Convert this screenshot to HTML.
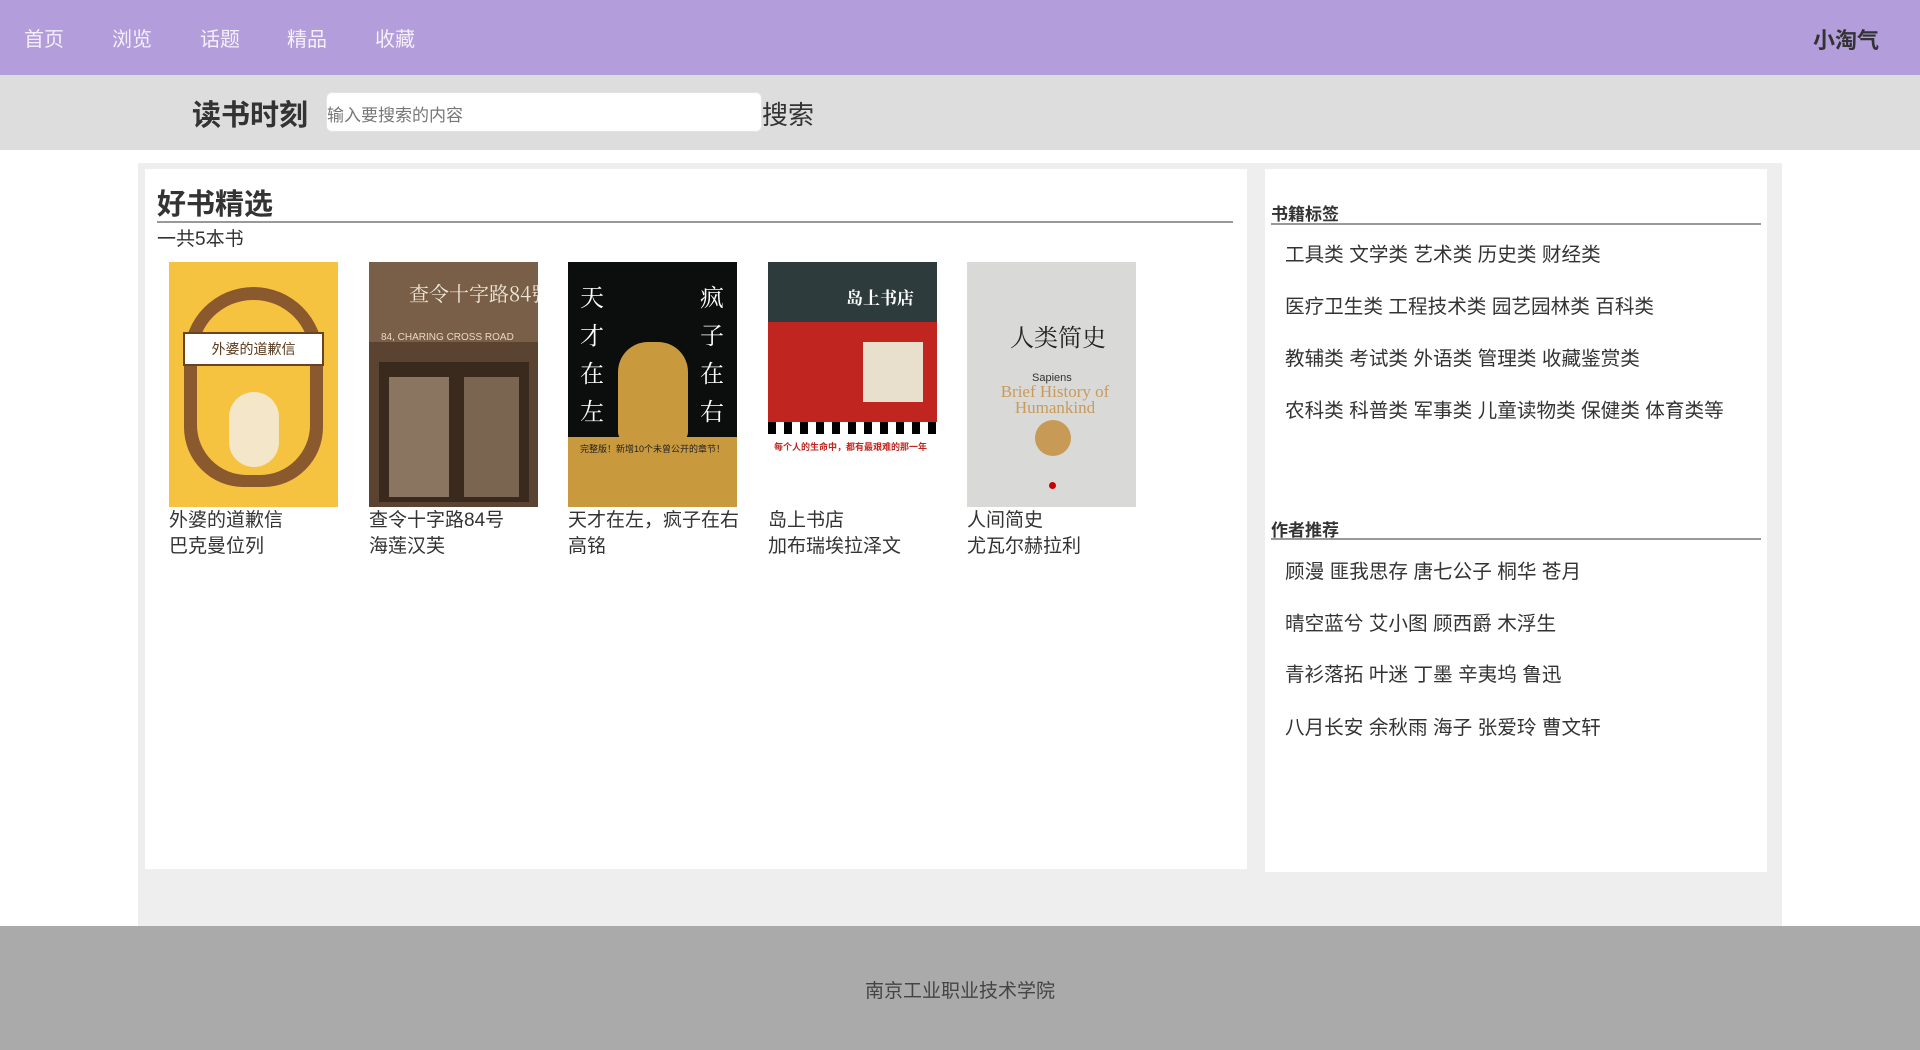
<!DOCTYPE html>
<html><head><meta charset="utf-8">
<style>
*{margin:0;padding:0;box-sizing:border-box}
body{width:1920px;height:1050px;position:relative;background:#fff;font-family:"Liberation Sans","Noto Sans CJK SC",sans-serif;color:#333;overflow:hidden}
.a{position:absolute;white-space:nowrap}
.hdr{left:0;top:0;width:1920px;height:75px;background:#b39ddb}
.nav{top:23px;font-size:20px;color:#f4f0fa}
.sb{left:0;top:75px;width:1920px;height:75px;background:#dddddd}
.cover{position:absolute;top:262px;width:169px;height:245px;overflow:hidden}
.bt{font-size:19px;color:#333;line-height:26px}
.tag{left:1285px;font-size:19.6px;color:#333;word-spacing:0}
</style></head><body>
<div class="a hdr"></div>
<div class="a nav" style="left:24px">首页</div>
<div class="a nav" style="left:112px">浏览</div>
<div class="a nav" style="left:200px">话题</div>
<div class="a nav" style="left:287px">精品</div>
<div class="a nav" style="left:375px">收藏</div>
<div class="a" style="left:1813px;top:23px;font-size:22px;font-weight:bold;color:#333">小淘气</div>

<div class="a sb"></div>
<div class="a" style="left:192px;top:92px;font-size:29px;font-weight:bold;color:#333">读书时刻</div>
<div class="a" style="left:326px;top:92px;width:436px;height:40px;background:#fff;border-radius:6px;border:1px solid #e4e4e4"></div>
<div class="a" style="left:327px;top:101px;font-size:17px;color:#777">输入要搜索的内容</div>
<div class="a" style="left:762px;top:95px;font-size:26px;color:#333">搜索</div>

<div class="a" style="left:138px;top:163px;width:1644px;height:763px;background:#eeeeee"></div>
<div class="a" style="left:145px;top:169px;width:1102px;height:700px;background:#fff"></div>
<div class="a" style="left:1265px;top:169px;width:502px;height:703px;background:#fff"></div>

<div class="a" style="left:157px;top:181px;font-size:29px;font-weight:bold;color:#333">好书精选</div>
<div class="a" style="left:157px;top:221px;width:1076px;height:2px;background:#999"></div>
<div class="a" style="left:157px;top:224px;font-size:19px;color:#333">一共5本书</div>

<div class="cover" style="left:169px;background:#f6c341">
 <div style="position:absolute;left:15px;top:25px;width:139px;height:200px;border-radius:70px 70px 60px 60px;background:#8a5a2e"></div>
 <div style="position:absolute;left:28px;top:38px;width:113px;height:175px;border-radius:56px 56px 50px 50px;background:#f6c341"></div>
 <div style="position:absolute;left:14px;top:70px;width:141px;height:34px;background:#fff;border:2px solid #6b4323;font-size:14px;text-align:center;line-height:30px;color:#5a3a1c">外婆的道歉信</div>
 <div style="position:absolute;left:60px;top:130px;width:50px;height:75px;border-radius:25px;background:#f3e6c9"></div>
</div>
<div class="cover" style="left:369px;background:#5a4330">
 <div style="position:absolute;left:0;top:0;width:169px;height:80px;background:#7a5f48"></div>
 <div style="position:absolute;left:40px;top:16px;font-size:20px;color:#f0e6d8;white-space:nowrap;font-family:'Noto Serif CJK SC',serif">查令十字路84號</div>
 <div style="position:absolute;left:12px;top:70px;font-size:10px;color:#e6d8c2;white-space:nowrap">84, CHARING CROSS ROAD</div>
 <div style="position:absolute;left:10px;top:100px;width:150px;height:140px;background:#3a2a1e"></div>
 <div style="position:absolute;left:20px;top:115px;width:60px;height:120px;background:#8a7560"></div>
 <div style="position:absolute;left:95px;top:115px;width:55px;height:120px;background:#7a6550"></div>
</div>
<div class="cover" style="left:568px;background:#0c0d0d">
 <div style="position:absolute;left:12px;top:15px;font-size:24px;color:#fff;line-height:38px;width:24px;font-family:'Noto Serif CJK SC',serif">天才在左</div>
 <div style="position:absolute;left:132px;top:15px;font-size:24px;color:#fff;line-height:38px;width:24px;font-family:'Noto Serif CJK SC',serif">疯子在右</div>
 <div style="position:absolute;left:50px;top:80px;width:70px;height:100px;background:#c9993e;border-radius:30px 30px 10px 10px"></div>
 <div style="position:absolute;left:0;top:175px;width:169px;height:70px;background:#c9993e"></div>
 <div style="position:absolute;left:12px;top:180px;font-size:9px;color:#222">完整版！新增10个未曾公开的章节！</div>
</div>
<div class="cover" style="left:768px;background:#b81f1f">
 <div style="position:absolute;left:0;top:0;width:169px;height:160px;background:#2e3b3c"></div>
 <div style="position:absolute;left:78px;top:22px;font-size:17px;color:#fff;font-weight:bold;font-family:'Noto Serif CJK SC',serif">岛上书店</div>
 <div style="position:absolute;left:0;top:60px;width:169px;height:100px;background:#c0261f"></div>
 <div style="position:absolute;left:95px;top:80px;width:60px;height:60px;background:#e8e0cc"></div>
 <div style="position:absolute;left:0;top:160px;width:169px;height:12px;background:repeating-linear-gradient(90deg,#000 0 8px,#fff 8px 16px)"></div>
 <div style="position:absolute;left:0;top:172px;width:169px;height:73px;background:#fff"></div>
 <div style="position:absolute;left:6px;top:178px;font-size:9px;color:#c0261f;font-weight:bold">每个人的生命中，都有最艰难的那一年</div>
</div>
<div class="cover" style="left:967px;background:#d9d9d7">
 <div style="position:absolute;left:43px;top:56px;font-size:24px;color:#222;font-family:'Noto Serif CJK SC',serif">人类简史</div>
 <div style="position:absolute;left:65px;top:110px;font-size:11px;color:#333">Sapiens</div>
 <div style="position:absolute;left:28px;top:122px;font-size:17px;color:#c99a5a;line-height:16px;font-family:'Liberation Serif',serif;text-align:center;width:120px">Brief History of Humankind</div>
 <div style="position:absolute;left:68px;top:158px;width:36px;height:36px;border-radius:18px;background:#c79a55"></div>
 <div style="position:absolute;left:82px;top:220px;width:7px;height:7px;border-radius:4px;background:#c00"></div>
</div>

<div class="a bt" style="left:169px;top:508px">外婆的道歉信<br>巴克曼位列</div>
<div class="a bt" style="left:369px;top:508px">查令十字路84号<br>海莲汉芙</div>
<div class="a bt" style="left:568px;top:508px">天才在左，疯子在右<br>高铭</div>
<div class="a bt" style="left:768px;top:508px">岛上书店<br>加布瑞埃拉泽文</div>
<div class="a bt" style="left:967px;top:508px">人间简史<br>尤瓦尔赫拉利</div>

<div class="a" style="left:1271px;top:200px;font-size:17px;font-weight:bold;color:#333">书籍标签</div>
<div class="a" style="left:1271px;top:223px;width:490px;height:2px;background:#999"></div>
<div class="a tag" style="top:238px">工具类 文学类 艺术类 历史类 财经类</div>
<div class="a tag" style="top:290px">医疗卫生类 工程技术类 园艺园林类 百科类</div>
<div class="a tag" style="top:342px">教辅类 考试类 外语类 管理类 收藏鉴赏类</div>
<div class="a tag" style="top:394px">农科类 科普类 军事类 儿童读物类 保健类 体育类等</div>

<div class="a" style="left:1271px;top:516px;font-size:17px;font-weight:bold;color:#333">作者推荐</div>
<div class="a" style="left:1271px;top:538px;width:490px;height:2px;background:#999"></div>
<div class="a tag" style="top:555px">顾漫 匪我思存 唐七公子 桐华 苍月</div>
<div class="a tag" style="top:607px">晴空蓝兮 艾小图 顾西爵 木浮生</div>
<div class="a tag" style="top:658px">青衫落拓 叶迷 丁墨 辛夷坞 鲁迅</div>
<div class="a tag" style="top:711px">八月长安 余秋雨 海子 张爱玲 曹文轩</div>

<div class="a" style="left:0;top:926px;width:1920px;height:124px;background:#aaaaaa"></div>
<div class="a" style="left:0;top:976px;width:1920px;text-align:center;font-size:19px;color:#444">南京工业职业技术学院</div>
</body></html>
